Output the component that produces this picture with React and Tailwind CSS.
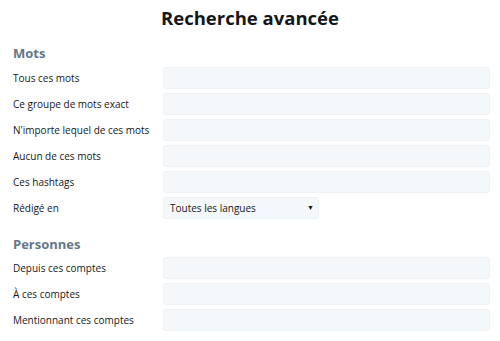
const wordFields = [
  "Tous ces mots",
  "Ce groupe de mots exact",
  "N'importe lequel de ces mots",
  "Aucun de ces mots",
  "Ces hashtags",
];

const peopleFields = ["Depuis ces comptes", "À ces comptes", "Mentionnant ces comptes"];

const Row = ({ label, children }) => (
  <div className="flex items-center h-[22px]">
    <label className="w-[150px] shrink-0 text-[10px] text-[#14171a]">{label}</label>
    {children}
  </div>
);

const Field = () => (
  <div className="h-[22px] flex-1 rounded-[3px] bg-[#f5f8fa] border border-[#eef1f4]" />
);

const App = () => {
  return (
    <div
      className="w-[500px] h-[341px] bg-white overflow-hidden pl-[13px] pr-[10px]"
      style={{ fontFamily: '"Open Sans", "Noto Sans", sans-serif' }}
    >
      <h1 className="pt-[4px] h-[32px] text-[18.5px] leading-[28px] font-bold text-center text-[#14171a] pr-[3px]">
        Recherche avancée
      </h1>
      <h2 className="mt-[11px] h-[20px] leading-[20px] text-[13px] font-bold text-[#657786]">Mots</h2>
      <div className="mt-[4px] flex flex-col gap-[4px]">
        {wordFields.map((f) => (
          <Row key={f} label={f}>
            <Field />
          </Row>
        ))}
        <Row label="Rédigé en">
          <div className="h-[22px] w-[156px] rounded-[3px] bg-[#f5f8fa] border border-[#eef1f4] flex items-center justify-between pl-[6px] pr-[4px] text-[10px] text-[#14171a]">
            <span>Toutes les langues</span>
            <span className="text-[7px]">▼</span>
          </div>
        </Row>
      </div>
      <h2 className="mt-[15px] h-[20px] leading-[20px] text-[13px] font-bold text-[#657786]">Personnes</h2>
      <div className="mt-[3px] flex flex-col gap-[4px]">
        {peopleFields.map((f) => (
          <Row key={f} label={f}>
            <Field />
          </Row>
        ))}
      </div>
    </div>
  );
};

export default App;
